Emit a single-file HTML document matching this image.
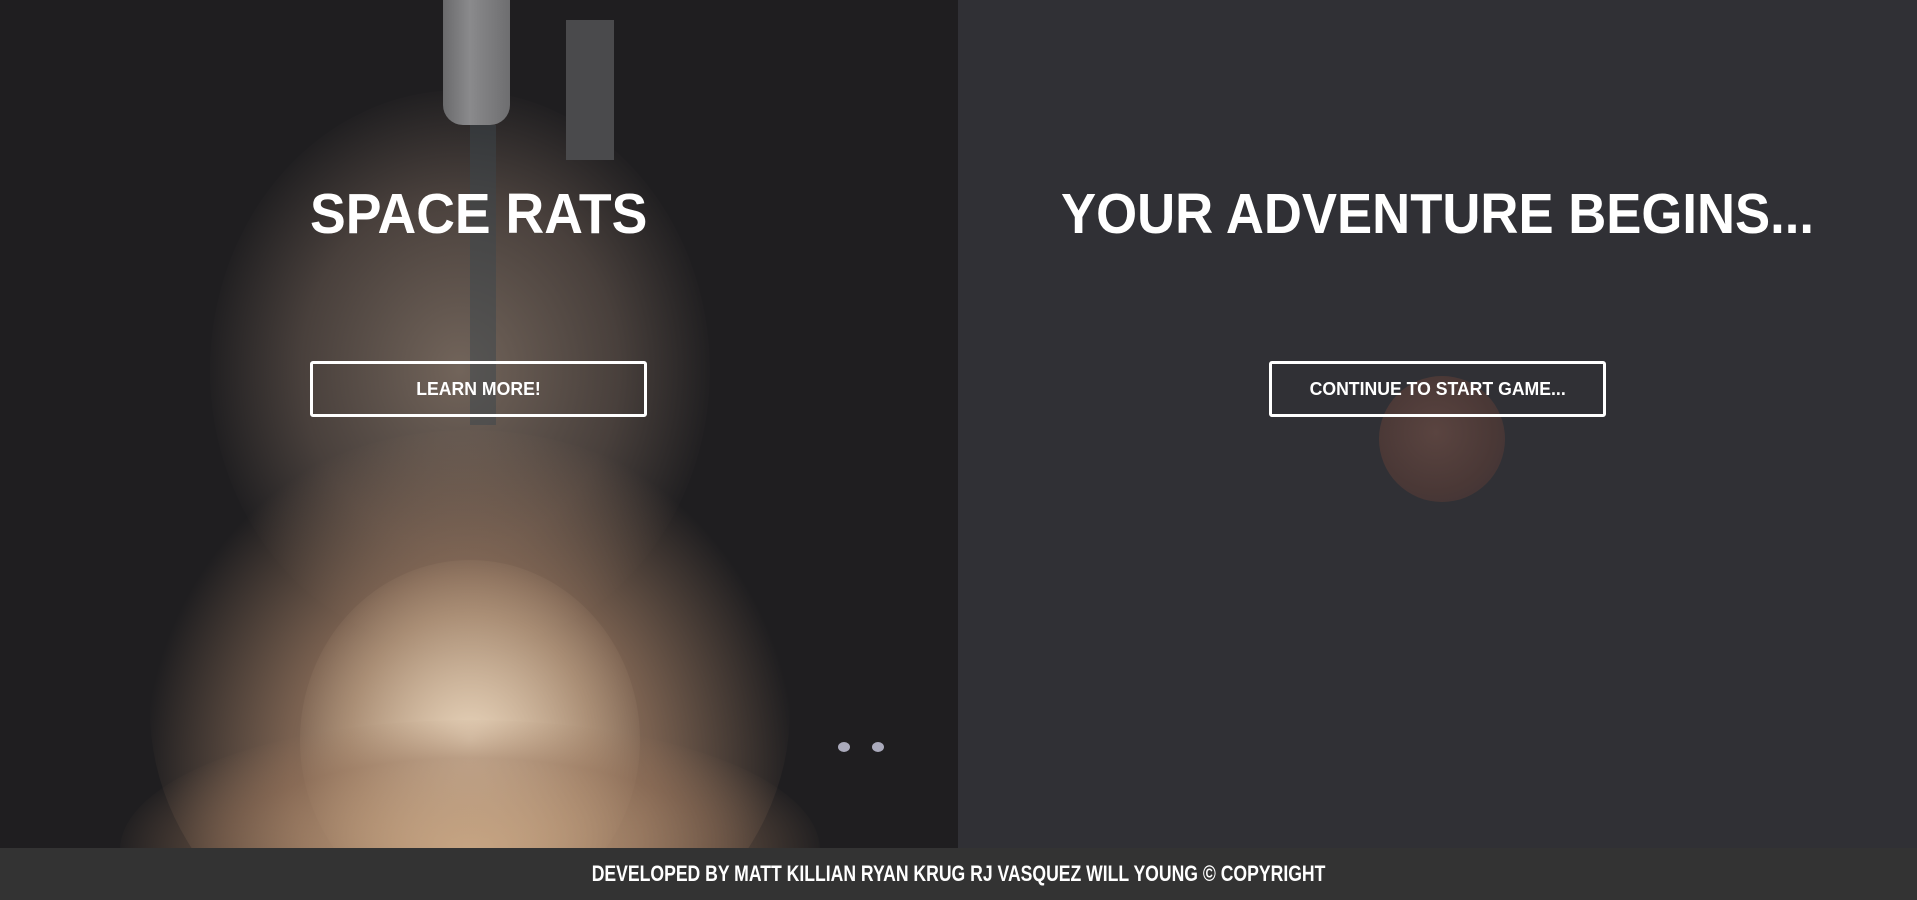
<!DOCTYPE html>
<html><head><meta charset="utf-8"><style>
html,body{margin:0;padding:0;width:1917px;height:900px;overflow:hidden;background:#222;font-family:"Liberation Sans",sans-serif}
.left{position:absolute;left:0;top:0;width:958px;height:848px;background:#1f1e20;overflow:hidden}
.right{position:absolute;left:958px;top:0;width:959px;height:848px;background:#303035;overflow:hidden}
.b{position:absolute;border-radius:50%}
.title{position:absolute;top:184px;color:#fff;font-weight:bold;font-size:57px;line-height:60px;white-space:nowrap;transform-origin:left center}
.btn{position:absolute;top:361px;width:331px;height:50px;border:3px solid #fff;border-radius:3px;color:#fff;font-weight:bold;font-size:18px;line-height:50px;text-align:center}
.btn span{display:inline-block;transform:scaleX(0.98)}
.footer{position:absolute;left:0;top:848px;width:1917px;height:52px;background:#333;color:#fff;font-weight:bold;font-size:22px;line-height:52px;text-align:center;overflow:hidden}
.footer span{display:inline-block;transform:scaleX(0.80)}
</style></head><body>
<div class="left">
  <div class="b" style="left:210px;top:90px;width:500px;height:560px;background:radial-gradient(ellipse at center,rgba(135,118,105,.8) 0%,rgba(100,86,78,.6) 45%,rgba(31,30,32,0) 72%)"></div>
  <div class="b" style="left:150px;top:430px;width:640px;height:560px;background:radial-gradient(ellipse at 50% 60%,rgba(205,175,145,.9) 0%,rgba(160,125,100,.7) 40%,rgba(31,30,32,0) 72%)"></div>
  <div class="b" style="left:300px;top:560px;width:340px;height:360px;background:radial-gradient(ellipse at center,rgba(235,215,190,.9) 0%,rgba(200,170,140,.5) 50%,rgba(0,0,0,0) 75%)"></div>
  <div class="b" style="left:120px;top:720px;width:700px;height:260px;background:radial-gradient(ellipse at center,rgba(200,165,130,.85) 0%,rgba(150,115,90,.5) 50%,rgba(0,0,0,0) 72%)"></div>
  <div style="position:absolute;left:443px;top:0;width:67px;height:125px;background:linear-gradient(90deg,#6a6a6c,#8a8a8c 40%,#6e6e70);border-radius:0 0 20px 20px"></div>
  <div style="position:absolute;left:566px;top:20px;width:48px;height:140px;background:#4a4a4c"></div>
  <div style="position:absolute;left:470px;top:125px;width:26px;height:300px;background:rgba(60,70,75,.5)"></div>
  <div class="b" style="left:838px;top:742px;width:12px;height:10px;background:#aab"></div>
  <div class="b" style="left:872px;top:742px;width:12px;height:10px;background:#aab"></div>
  <div class="title" style="left:310px;transform:scaleX(0.94)">SPACE RATS</div>
  <div class="btn" style="left:310px"><span>LEARN MORE!</span></div>
</div>
<div class="right">
  <div class="b" style="left:421px;top:376px;width:126px;height:126px;background:radial-gradient(circle at 45% 45%,#5a4440,#4a3836 60%,#3c3234)"></div>
  <div class="title" style="left:103px;transform:scaleX(0.924)">YOUR ADVENTURE BEGINS...</div>
  <div class="btn" style="left:311px"><span>CONTINUE TO START GAME...</span></div>
</div>
<div class="footer"><span>DEVELOPED BY MATT KILLIAN RYAN KRUG RJ VASQUEZ WILL YOUNG © COPYRIGHT</span></div>
</body></html>
